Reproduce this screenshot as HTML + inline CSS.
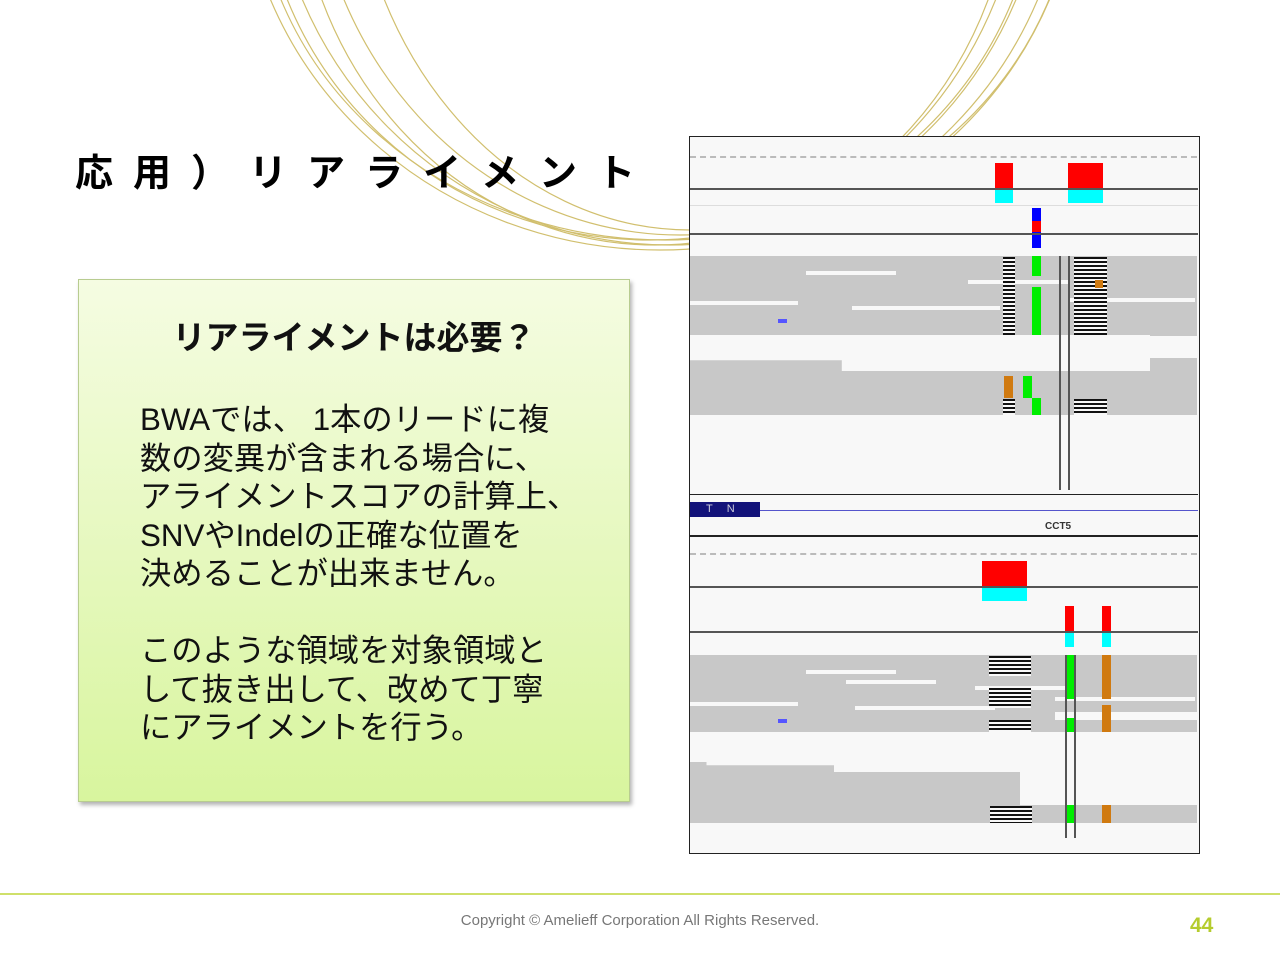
<!DOCTYPE html>
<html><head><meta charset="utf-8">
<style>
*{margin:0;padding:0;box-sizing:border-box}
body{width:1280px;height:960px;background:#fff;position:relative;overflow:hidden;font-family:"Liberation Sans","Noto Sans CJK JP",sans-serif}
.a{position:absolute}
h1{position:absolute;left:75px;top:150px;font-size:38px;font-weight:bold;letter-spacing:20px;color:#000;white-space:nowrap;line-height:48px}
.box{left:78px;top:279px;width:552px;height:523px;background:linear-gradient(#f5fce2,#d8f59e);border:1px solid #b8cc90;box-shadow:2px 3px 4px rgba(0,0,0,.3)}
.bt{position:absolute;left:0;width:100%;top:31px;text-align:center;font-size:33px;font-weight:bold;color:#111}
.bd{position:absolute;left:61px;top:121px;font-size:31.3px;line-height:38.5px;color:#111;white-space:nowrap}
.g{background:#c8c8c8}.w{background:#f8f8f8}.r{background:#f00}.c{background:#0ff}.gr{background:#0e0}.o{background:#d07a10}.k{background:#555}
.st{background:repeating-linear-gradient(#111 0 2px,#f8f8f8 2px 4px)}
</style></head><body>
<svg class="a" style="left:0;top:0" width="1280" height="260">
<g fill="none" stroke="#c9b455" stroke-width="1.2" opacity=".85">
<ellipse cx="660" cy="-150" rx="420" ry="400"/>
<ellipse cx="670" cy="-160" rx="400" ry="405"/>
<ellipse cx="650" cy="-140" rx="390" ry="380"/>
<ellipse cx="680" cy="-170" rx="370" ry="405"/>
<ellipse cx="655" cy="-150" rx="360" ry="395"/>
<ellipse cx="665" cy="-130" rx="410" ry="370"/>
<ellipse cx="690" cy="-180" rx="340" ry="410"/>
</g></svg>
<h1>応用）リアライメント</h1>
<div class="a box">
<div class="bt">リアライメントは必要？</div>
<div class="bd">BWAでは、 1本のリードに複<br>数の変異が含まれる場合に、<br>アライメントスコアの計算上、<br>SNVやIndelの正確な位置を<br>決めることが出来ません。<br><br>このような領域を対象領域と<br>して抜き出して、改めて丁寧<br>にアライメントを行う。</div>
</div>
<!-- IGV image -->
<div class="a" style="left:689px;top:136px;width:511px;height:718px;background:#f8f8f8;border:1px solid #222">
</div>
<div class="a" style="left:690px;top:156px;width:507px;height:2px;border-top:2px dashed #bbb"></div>
<div class="a r" style="left:995px;top:163px;width:18px;height:25px"></div>
<div class="a r" style="left:1068px;top:163px;width:35px;height:25px"></div>
<div class="a k" style="left:690px;top:188px;width:508px;height:2px"></div>
<div class="a c" style="left:995px;top:190px;width:18px;height:13px"></div>
<div class="a c" style="left:1068px;top:190px;width:35px;height:13px"></div>
<div class="a" style="left:690px;top:205px;width:508px;height:1px;background:#ddd"></div>
<div class="a" style="left:1032px;top:208px;width:9px;height:40px;background:linear-gradient(#00f 0 33%,#f00 33% 60%,#00f 60%)"></div>
<div class="a k" style="left:690px;top:233px;width:508px;height:2px"></div>
<div class="a g" style="left:690px;top:256px;width:507px;height:80px"></div>
<div class="a w" style="left:806px;top:271px;width:90px;height:4px"></div>
<div class="a w" style="left:968px;top:280px;width:100px;height:4px"></div>
<div class="a w" style="left:690px;top:301px;width:108px;height:4px"></div>
<div class="a w" style="left:852px;top:306px;width:148px;height:4px"></div>
<div class="a w" style="left:1070px;top:298px;width:125px;height:4px"></div>
<div class="a g" style="left:690px;top:355px;width:507px;height:60px;clip-path:polygon(0 0,3% 0,3% 5%,100% 5%,100% 100%,0 100%)"></div>
<div class="a w" style="left:690px;top:335px;width:460px;height:36px;clip-path:polygon(0 0,100% 0,100% 100%,33% 100%,33% 70%,0 70%)"></div>
<div class="a st" style="left:1003px;top:257px;width:12px;height:78px"></div>
<div class="a st" style="left:1074px;top:257px;width:33px;height:78px"></div>
<div class="a st" style="left:1003px;top:399px;width:12px;height:16px"></div>
<div class="a st" style="left:1074px;top:399px;width:33px;height:16px"></div>
<div class="a gr" style="left:1032px;top:256px;width:9px;height:20px"></div>
<div class="a gr" style="left:1032px;top:287px;width:9px;height:48px"></div>
<div class="a gr" style="left:1023px;top:376px;width:9px;height:22px"></div>
<div class="a gr" style="left:1032px;top:398px;width:9px;height:17px"></div>
<div class="a o" style="left:1004px;top:376px;width:9px;height:22px"></div>
<div class="a o" style="left:1095px;top:280px;width:8px;height:8px"></div>
<div class="a" style="left:778px;top:319px;width:9px;height:4px;background:#55f"></div>
<div class="a k" style="left:1059px;top:256px;width:2px;height:234px"></div>
<div class="a k" style="left:1068px;top:256px;width:2px;height:234px"></div>
<!-- gene track -->
<div class="a" style="left:690px;top:494px;width:508px;height:1px;background:#222"></div>
<div class="a" style="left:690px;top:510px;width:508px;height:1px;background:#55c"></div>
<div class="a" style="left:690px;top:502px;width:70px;height:15px;background:#13137a;color:#ccd;font-size:11px;line-height:15px;padding-left:16px;letter-spacing:14px">TN</div>
<div class="a" style="left:1045px;top:521px;font-size:10px;color:#333;font-weight:bold">CCT5</div>
<div class="a" style="left:690px;top:535px;width:508px;height:2px;background:#222"></div>
<!-- bottom panel -->
<div class="a" style="left:690px;top:553px;width:507px;height:2px;border-top:2px dashed #bbb"></div>
<div class="a r" style="left:982px;top:561px;width:45px;height:25px"></div>
<div class="a k" style="left:690px;top:586px;width:508px;height:2px"></div>
<div class="a c" style="left:982px;top:588px;width:45px;height:13px"></div>
<div class="a r" style="left:1065px;top:606px;width:9px;height:26px"></div>
<div class="a r" style="left:1102px;top:606px;width:9px;height:26px"></div>
<div class="a k" style="left:690px;top:631px;width:508px;height:2px"></div>
<div class="a c" style="left:1065px;top:633px;width:9px;height:14px"></div>
<div class="a c" style="left:1102px;top:633px;width:9px;height:14px"></div>
<div class="a g" style="left:690px;top:655px;width:507px;height:77px"></div>
<div class="a w" style="left:806px;top:670px;width:90px;height:4px"></div>
<div class="a w" style="left:846px;top:680px;width:90px;height:4px"></div>
<div class="a w" style="left:975px;top:686px;width:100px;height:4px"></div>
<div class="a w" style="left:1055px;top:697px;width:140px;height:4px"></div>
<div class="a w" style="left:690px;top:702px;width:108px;height:4px"></div>
<div class="a w" style="left:855px;top:706px;width:140px;height:4px"></div>
<div class="a w" style="left:1055px;top:712px;width:142px;height:8px"></div>
<div class="a g" style="left:690px;top:755px;width:330px;height:68px;clip-path:polygon(0 0,5% 0,5% 15%,100% 15%,100% 100%,0 100%)"></div>
<div class="a g" style="left:1020px;top:805px;width:177px;height:18px"></div>
<div class="a w" style="left:690px;top:732px;width:360px;height:40px;clip-path:polygon(0 0,100% 0,100% 100%,40% 100%,40% 75%,0 75%)"></div>
<div class="a st" style="left:989px;top:656px;width:42px;height:20px"></div>
<div class="a st" style="left:989px;top:688px;width:42px;height:20px"></div>
<div class="a st" style="left:989px;top:720px;width:42px;height:12px"></div>
<div class="a st" style="left:990px;top:806px;width:42px;height:17px"></div>
<div class="a gr" style="left:1066px;top:655px;width:9px;height:44px"></div>
<div class="a gr" style="left:1066px;top:718px;width:9px;height:14px"></div>
<div class="a gr" style="left:1066px;top:805px;width:9px;height:18px"></div>
<div class="a o" style="left:1102px;top:655px;width:9px;height:44px"></div>
<div class="a o" style="left:1102px;top:705px;width:9px;height:27px"></div>
<div class="a o" style="left:1102px;top:805px;width:9px;height:18px"></div>
<div class="a" style="left:778px;top:719px;width:9px;height:4px;background:#55f"></div>
<div class="a k" style="left:1065px;top:655px;width:2px;height:183px"></div>
<div class="a k" style="left:1074px;top:655px;width:2px;height:183px"></div>
<!-- footer -->
<div class="a" style="left:0;top:893px;width:1280px;height:2px;background:#cfe06a"></div>
<div class="a" style="left:0;top:912px;width:1280px;text-align:center;font-size:15px;color:#777">Copyright © Amelieff Corporation All Rights Reserved.</div>
<div class="a" style="left:1190px;top:914px;font-size:21px;font-weight:bold;color:#b5cc2e">44</div>
</body></html>
